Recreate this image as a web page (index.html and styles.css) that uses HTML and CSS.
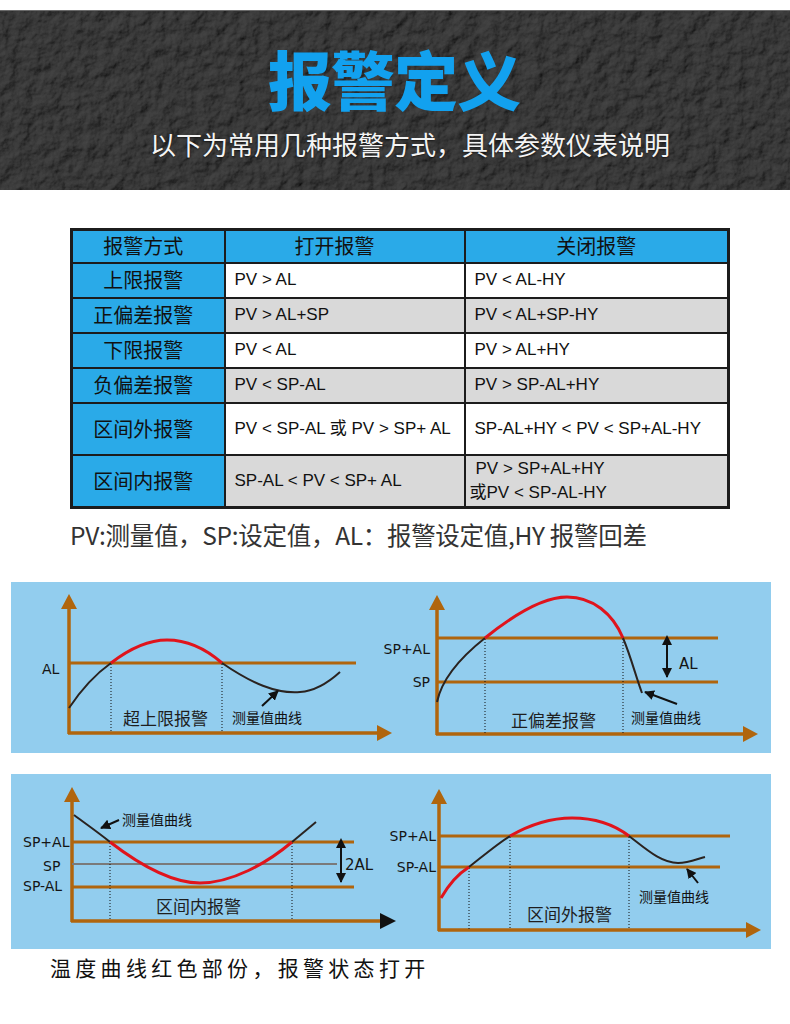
FILE: index.html
```html
<!DOCTYPE html>
<html lang="zh-CN">
<head>
<meta charset="utf-8">
<title>报警定义</title>
<link rel="stylesheet" href="styles.css">
</head>
<body>
<header class="hero">
  <svg class="texture" viewBox="0 0 790 180" preserveAspectRatio="none" aria-hidden="true">
    <filter id="rock" x="0" y="0" width="100%" height="100%">
      <feTurbulence type="fractalNoise" baseFrequency="0.07" numOctaves="5" seed="7" result="n"/>
      <feDiffuseLighting in="n" surfaceScale="3" diffuseConstant="1" lighting-color="#444444" result="l">
        <feDistantLight azimuth="225" elevation="42"/>
      </feDiffuseLighting>
    </filter>
    <rect width="790" height="180" fill="#2b2b2b" filter="url(#rock)"/>
  </svg>
  <div class="hero-text">
    <h1 class="title">报警定义</h1>
    <p class="subtitle">以下为常用几种报警方式，具体参数仪表说明</p>
  </div>
</header>

<table class="alarm-table">
  <colgroup><col class="c1"><col class="c2"><col class="c3"></colgroup>
  <tr class="head"><th class="kind">报警方式</th><th class="open">打开报警</th><th>关闭报警</th></tr>
  <tr class="r-a"><th class="kind">上限报警</th><td>PV &gt; AL</td><td>PV &lt; AL-HY</td></tr>
  <tr class="r-b"><th class="kind">正偏差报警</th><td>PV &gt; AL+SP</td><td>PV &lt; AL+SP-HY</td></tr>
  <tr class="r-a"><th class="kind">下限报警</th><td>PV &lt; AL</td><td>PV &gt; AL+HY</td></tr>
  <tr class="r-b"><th class="kind">负偏差报警</th><td>PV &lt; SP-AL</td><td>PV &gt; SP-AL+HY</td></tr>
  <tr class="r-a tall"><th class="kind">区间外报警</th><td>PV &lt; SP-AL 或 PV &gt; SP+ AL</td><td>SP-AL+HY &lt; PV &lt; SP+AL-HY</td></tr>
  <tr class="r-b tall"><th class="kind">区间内报警</th><td>SP-AL &lt; PV &lt; SP+ AL</td><td class="two">PV &gt; SP+AL+HY<br>或PV &lt; SP-AL-HY</td></tr>
</table>

<p class="legend">PV:测量值，SP:设定值，AL：报警设定值,HY 报警回差</p>

<section class="band band-top">
  <svg class="chart" viewBox="0 0 760 171" aria-label="超上限报警与正偏差报警">
    <defs>
      <marker id="ah" viewBox="0 0 10 10" refX="9" refY="5" markerWidth="5" markerHeight="5" orient="auto">
        <path d="M0,0 L10,5 L0,10 z" fill="#111"/>
      </marker>
      <marker id="ahs" viewBox="0 0 10 10" refX="1" refY="5" markerWidth="5" markerHeight="5" orient="auto-start-reverse">
        <path d="M0,0 L10,5 L0,10 z" fill="#111"/>
      </marker>
    </defs>
    <!-- chart 1 -->
    <g class="axis">
      <line x1="58" y1="24" x2="58" y2="152"/>
      <line x1="57" y1="151" x2="368" y2="151"/>
    </g>
    <polygon class="axis-head" points="58,12 50,27 66,27"/>
    <polygon class="axis-head" points="381,151 366,143 366,159"/>
    <line class="level" x1="58" y1="81" x2="345" y2="81"/>
    <line class="dot" x1="100" y1="82" x2="100" y2="150"/>
    <line class="dot" x1="211" y1="82" x2="211" y2="150"/>
    <path class="pv" d="M58,126 C70,108 86,91 100,81"/>
    <path class="hot" d="M100,81 C122,64 140,58 156,58 C176,58 195,67 211,81"/>
    <path class="pv" d="M211,81 C240,101 265,112 289,110 C305,109 318,100 329,90"/>
    <text class="lab" x="31" y="92">AL</text>
    <text class="cap" x="112" y="143">超上限报警</text>
    <text class="note" x="221" y="141">测量值曲线</text>
    <line class="ptr" x1="251" y1="124" x2="267" y2="109" marker-end="url(#ah)"/>

    <!-- chart 2 -->
    <g class="axis">
      <line x1="426" y1="25" x2="426" y2="153"/>
      <line x1="425" y1="152" x2="733" y2="152"/>
    </g>
    <polygon class="axis-head" points="426,13 418,28 434,28"/>
    <polygon class="axis-head" points="747,152 732,144 732,160"/>
    <line class="level" x1="426" y1="56" x2="707" y2="56"/>
    <line class="level" x1="426" y1="100" x2="707" y2="100"/>
    <line class="dot" x1="474" y1="57" x2="474" y2="151"/>
    <line class="dot" x1="612" y1="57" x2="612" y2="151"/>
    <path class="pv" d="M426,120 C431,96 450,75 474,56"/>
    <path class="hot" d="M474,56 C500,35 530,15 556,15 C582,15 602,32 612,56"/>
    <path class="pv" d="M612,56 C620,75 625,95 631,111"/>
    <text class="lab end" x="419" y="72">SP+AL</text>
    <text class="lab end" x="419" y="105">SP</text>
    <line class="ptr" x1="656" y1="62" x2="656" y2="95" marker-start="url(#ahs)" marker-end="url(#ah)"/>
    <text class="lab big" x="668" y="87">AL</text>
    <text class="cap" x="500" y="145">正偏差报警</text>
    <text class="note" x="620" y="141">测量值曲线</text>
    <line class="ptr" x1="666" y1="122" x2="634" y2="110" marker-end="url(#ah)"/>
  </svg>
</section>

<section class="band band-bottom">
  <svg class="chart" viewBox="0 0 760 175" aria-label="区间内报警与区间外报警">
    <!-- chart 3 -->
    <g class="axis">
      <line x1="61" y1="25" x2="61" y2="148"/>
      <line x1="60" y1="147" x2="370" y2="147"/>
    </g>
    <polygon class="axis-head" points="61,13 53,28 69,28"/>
    <polygon class="black-head" points="385,147 369,139 369,155"/>
    <line class="level" x1="61" y1="68" x2="343" y2="68"/>
    <line class="mid" x1="61" y1="90" x2="326" y2="90"/>
    <line class="level" x1="61" y1="113" x2="343" y2="113"/>
    <line class="dot" x1="99" y1="69" x2="99" y2="146"/>
    <line class="dot" x1="281" y1="69" x2="281" y2="146"/>
    <path class="pv" d="M63,41 C75,50 88,59 99,68"/>
    <path class="hot" d="M99,68 C125,88 160,109 189,109 C220,109 255,90 281,68"/>
    <path class="pv" d="M281,68 L305,48"/>
    <text class="lab" x="12" y="73">SP+AL</text>
    <text class="lab" x="32" y="97">SP</text>
    <text class="lab" x="12" y="117">SP-AL</text>
    <line class="ptr" x1="330" y1="73" x2="330" y2="108" marker-start="url(#ahs)" marker-end="url(#ah)"/>
    <text class="lab big" x="334" y="96">2AL</text>
    <text class="cap" x="145" y="139">区间内报警</text>
    <text class="note" x="111" y="51">测量值曲线</text>
    <line class="ptr" x1="108" y1="46" x2="90" y2="54" marker-end="url(#ah)"/>

    <!-- chart 4 -->
    <g class="axis">
      <line x1="428" y1="27" x2="428" y2="157"/>
      <line x1="427" y1="156" x2="735" y2="156"/>
    </g>
    <polygon class="axis-head" points="428,15 420,30 436,30"/>
    <polygon class="axis-head" points="750,156 735,148 735,164"/>
    <line class="level" x1="428" y1="62" x2="719" y2="62"/>
    <line class="level" x1="428" y1="93" x2="709" y2="93"/>
    <line class="dot" x1="458" y1="94" x2="458" y2="155"/>
    <line class="dot" x1="499" y1="63" x2="499" y2="155"/>
    <line class="dot" x1="618" y1="63" x2="618" y2="155"/>
    <path class="hot" d="M430,124 C438,110 447,100 458,93"/>
    <path class="pv" d="M458,93 C472,82 486,70 499,62"/>
    <path class="hot" d="M499,62 C520,50 540,44 561,44 C585,44 605,52 618,62"/>
    <path class="pv" d="M618,62 C635,75 650,89 667,89 C678,89 686,85 694,83"/>
    <text class="lab end" x="425" y="67">SP+AL</text>
    <text class="lab end" x="425" y="98">SP-AL</text>
    <text class="cap" x="516" y="147">区间外报警</text>
    <text class="note" x="628" y="128">测量值曲线</text>
    <line class="ptr" x1="687" y1="109" x2="676" y2="95" marker-end="url(#ah)"/>
  </svg>
</section>

<p class="footnote">温度曲线红色部份，报警状态打开</p>
</body>
</html>
```

FILE: styles.css
```css
html, body {
  margin: 0;
  padding: 0;
  background: #ffffff;
}

body {
  width: 790px;
  font-family: "Noto Sans CJK SC", "Liberation Sans", sans-serif;
  color: #111;
}

/* ---------- hero ---------- */
.hero {
  margin-top: 10px;
  height: 180px;
  display: grid;
  border-top: 1px solid #6a6a6a;
  box-sizing: border-box;
  overflow: hidden;
}

.hero > * {
  grid-area: 1 / 1;
}

.texture {
  width: 790px;
  height: 180px;
  display: block;
}

.hero-text {
  display: flex;
  flex-direction: column;
  align-items: center;
  padding-top: 34px;
}

.title {
  margin: 0;
  font-family: "Noto Sans CJK SC", sans-serif;
  font-weight: 900;
  font-size: 64px;
  line-height: 64px;
  color: #12a1ef;
  letter-spacing: -1px;
  margin-left: -2px;
}

.subtitle {
  margin: 22px 0 0 0;
  padding-left: 30px;
  font-family: "Noto Sans CJK SC", sans-serif;
  font-size: 26px;
  line-height: 26px;
  color: #f4f4f4;
  text-shadow: 0 1px 2px rgba(0, 0, 0, 0.6);
}

/* ---------- table ---------- */
.alarm-table {
  margin: 38px 0 0 70px;
  width: 657px;
  border-collapse: collapse;
  table-layout: fixed;
  border: 3px solid #1c1c1c;
}

.c1 { width: 153px; }
.c2 { width: 240px; }
.c3 { width: 264px; }

.alarm-table th,
.alarm-table td {
  border: 2px solid #1c1c1c;
  padding: 0;
}

.alarm-table th {
  background: #2aaae8;
  font-family: "Noto Sans CJK SC", sans-serif;
  font-weight: 400;
  font-size: 20px;
  line-height: 24px;
  color: #111;
  text-align: center;
}

.alarm-table th.kind {
  padding-right: 10px;
}

.alarm-table th.open {
  padding-right: 20px;
}

.alarm-table tr.head {
  height: 33px;
}

.alarm-table tr {
  height: 35px;
}

.alarm-table tr.tall {
  height: 52.5px;
}

.alarm-table td {
  font-family: "Liberation Sans", "Noto Sans CJK SC", sans-serif;
  font-size: 17px;
  line-height: 22px;
  color: #111;
  padding-left: 9px;
  white-space: nowrap;
}

.r-a td { background: #ffffff; }
.r-b td { background: #d9d9d9; }

.alarm-table td.two {
  padding-left: 4px;
  text-indent: 6px;
  line-height: 24px;
}

/* ---------- legend ---------- */
.legend {
  margin: 11px 0 0 70px;
  font-family: "Noto Sans CJK SC", sans-serif;
  font-size: 24.5px;
  line-height: 30px;
  color: #333;
  letter-spacing: -0.3px;
}

/* ---------- chart bands ---------- */
.band {
  margin-left: 11px;
  width: 760px;
  background: #92cdee;
}

.band-top {
  margin-top: 32px;
  height: 171px;
}

.band-bottom {
  margin-top: 21px;
  height: 175px;
}

.chart {
  display: block;
  width: 760px;
  height: 100%;
}

.axis line {
  stroke: #b0650d;
  stroke-width: 3.5;
}

.axis-head {
  fill: #b0650d;
}

.black-head {
  fill: #111;
}

.level {
  stroke: #b0650d;
  stroke-width: 3;
}

.mid {
  stroke: #7a7a7a;
  stroke-width: 2;
}

.dot {
  stroke: #111;
  stroke-width: 1;
  stroke-dasharray: 1 2;
}

.pv {
  fill: none;
  stroke: #2a2320;
  stroke-width: 2;
}

.hot {
  fill: none;
  stroke: #e0141c;
  stroke-width: 3;
}

.ptr {
  stroke: #111;
  stroke-width: 2;
}

.lab {
  font-family: "DejaVu Sans", sans-serif;
  font-size: 14px;
  fill: #151515;
}

.lab.big {
  font-size: 15px;
}

.lab.end {
  text-anchor: end;
}

.cap {
  font-family: "Noto Sans CJK SC", sans-serif;
  font-size: 17px;
  fill: #1e1e1e;
}

.note {
  font-family: "Noto Sans CJK SC", sans-serif;
  font-size: 14px;
  fill: #111;
}

/* ---------- footnote ---------- */
.footnote {
  margin: 4px 0 0 50px;
  font-family: "Noto Sans CJK SC", sans-serif;
  font-size: 21px;
  line-height: 28px;
  letter-spacing: 4.3px;
  color: #111;
}
```
